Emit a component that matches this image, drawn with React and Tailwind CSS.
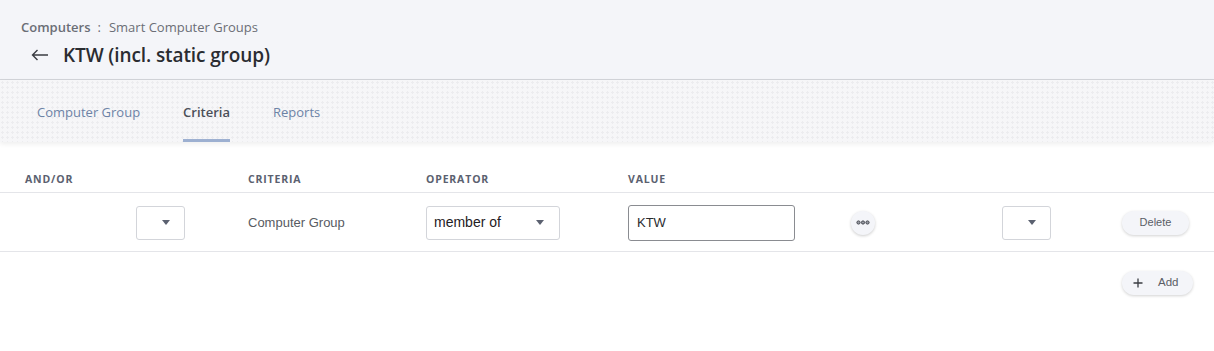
import { useState } from "react";

function Caret() {
  return (
    <svg width="8" height="5" viewBox="0 0 8 5">
      <path d="M0 0 L8 0 L4 5 Z" fill="#5b6170" />
    </svg>
  );
}

function SmallSelect() {
  return (
    <div className="w-[49px] h-[34px] border border-[#d3d5da] rounded-[3px] bg-white flex items-center justify-end pr-[14px]">
      <Caret />
    </div>
  );
}

function PillButton({ children, className }) {
  return (
    <button
      className={
        "h-[24px] rounded-full bg-[#f4f5f9] text-[11px] text-[#5a5d66] shadow-[0_1px_3px_rgba(0,0,0,0.18)] flex items-center " +
        className
      }
    >
      {children}
    </button>
  );
}

export default function App() {
  const [tab, setTab] = useState("Criteria");
  const tabs = [
    { name: "Computer Group", pl: "pl-[37px]" },
    { name: "Criteria", pl: "pl-[43px]" },
    { name: "Reports", pl: "pl-[43px]" },
  ];

  return (
    <div className="w-[1214px] h-[351px] bg-white font-['Open_Sans',sans-serif] overflow-hidden">
      {/* page header */}
      <div className="h-[80px] bg-[#f4f5f9] border-b border-[#d3d5da] pl-[21px] pt-[17px]">
        <div className="flex items-center text-[13px] leading-[20px] text-[#6b6e76]">
          <span className="font-semibold">Computers</span>
          <span className="ml-[7px] mr-[8px]">:</span>
          <span>Smart Computer Groups</span>
        </div>
        <div className="flex items-center mt-[7px] h-[22px]">
          <svg width="18" height="12" viewBox="0 0 18 12" className="ml-[10px]">
            <path d="M17 6 H1.5 M6.5 1 L1.5 6 L6.5 11" stroke="#3a3c42" strokeWidth="1.4" fill="none" />
          </svg>
          <h1 className="ml-[14px] text-[19px] font-semibold text-[#2a2c31] leading-[22px] tracking-[-0.1px]">
            KTW (incl. static group)
          </h1>
        </div>
      </div>

      {/* tabs */}
      <div className="h-[62px] bg-[#f6f6f8] bg-[image:radial-gradient(#ececef_1px,transparent_1.2px)] bg-[size:5px_5px] shadow-[0_2px_5px_rgba(0,0,0,0.07)] flex">
        {tabs.map((t) => (
          <div key={t.name} className={"flex " + t.pl}>
            <button
              onClick={() => setTab(t.name)}
              className={
                "h-full flex items-center pt-[6px] text-[13px] border-b-[3px] " +
                (tab === t.name
                  ? "font-semibold text-[#4b4f59] border-[#9db0d1]"
                  : "text-[#6d83a6] border-transparent")
              }
            >
              {t.name}
            </button>
          </div>
        ))}
      </div>

      {/* criteria table */}
      <div className="mt-[20px]">
        <div className="h-[31px] flex items-end pb-[4px] border-b border-[#e4e5e9] text-[10.5px] font-bold tracking-[0.08em] text-[#5b6170]">
          <div className="w-[226px] pl-[25px]">AND/OR</div>
          <div className="w-[178px] pl-[22px]">CRITERIA</div>
          <div className="w-[202px] pl-[22px]">OPERATOR</div>
          <div className="pl-[22px]">VALUE</div>
        </div>

        <div className="h-[59px] flex items-center pt-[1px] border-b border-[#e4e5e9] font-['Liberation_Sans',Arial,sans-serif]">
          <div className="w-[114px]"></div>
          <div className="w-[112px] pl-[22px]">
            <SmallSelect />
          </div>
          <div className="w-[178px] pl-[22px] text-[13px] text-[#585b62]">Computer Group</div>
          <div className="w-[202px] pl-[22px]">
            <div className="w-[134px] h-[34px] border border-[#d3d5da] rounded-[3px] flex items-center justify-between pl-[7px] pr-[15px] text-[14px] text-[#1f2024]">
              <span>member of</span>
              <Caret />
            </div>
          </div>
          <div className="w-[223px] pl-[22px]">
            <div className="w-[167px] h-[36px] border border-[#8a8c91] rounded-[3px] flex items-center pl-[8px] text-[13px] text-[#2a2b2f]">
              KTW
            </div>
          </div>
          <div className="w-[151px] pl-[22px]">
            <button className="w-[24px] h-[24px] rounded-full bg-[#f4f5f9] shadow-[0_1px_3px_rgba(0,0,0,0.2)] flex items-center justify-center">
              <svg width="14" height="5" viewBox="0 0 14 5">
                <circle cx="2.5" cy="2.5" r="1.6" fill="#9a9da5" stroke="#43464e" strokeWidth="1" />
                <circle cx="7" cy="2.5" r="1.6" fill="#9a9da5" stroke="#43464e" strokeWidth="1" />
                <circle cx="11.5" cy="2.5" r="1.6" fill="#9a9da5" stroke="#43464e" strokeWidth="1" />
              </svg>
            </button>
          </div>
          <div className="w-[120px] pl-[22px]">
            <SmallSelect />
          </div>
          <div className="pl-[22px]">
            <PillButton className="w-[67px] justify-center">Delete</PillButton>
          </div>
        </div>

        <div className="flex justify-end pr-[21px] mt-[19px] font-['Liberation_Sans',Arial,sans-serif]">
          <PillButton className="w-[71px] pl-[11px]">
            <svg width="10" height="10" viewBox="0 0 10 10" className="mr-[15px]">
              <path d="M5 0.5 V9.5 M0.5 5 H9.5" stroke="#3a3c42" strokeWidth="1.3" />
            </svg>
            <span className="text-[11.5px]">Add</span>
          </PillButton>
        </div>
      </div>
    </div>
  );
}
